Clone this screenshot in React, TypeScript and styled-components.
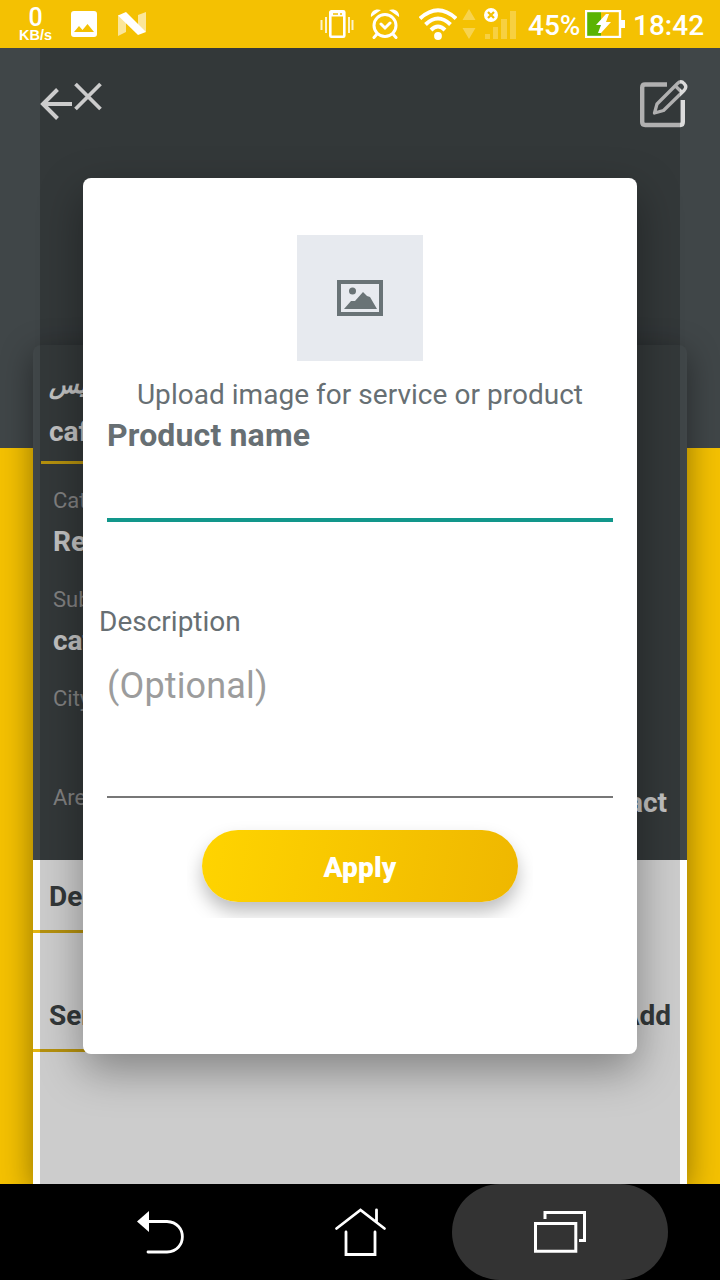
import React from "react";
import styled, { createGlobalStyle } from "styled-components";

const GlobalStyle = createGlobalStyle`
  * { box-sizing: border-box; }
  body {
    margin: 0;
    font-family: Roboto, "DejaVu Sans", sans-serif;
  }
  svg { display: block; flex: none; }
`;

const Screen = styled.div`
  width: 720px;
  height: 1280px;
  display: flex;
  flex-direction: column;
  overflow: hidden;
`;

const StatusBar = styled.header`
  height: 48px;
  flex: none;
  display: flex;
  align-items: center;
  padding: 0 16px 0 18px;
  background: #f4c102;
  color: #fff;
`;

const Speed = styled.div`
  width: 35px;
  display: flex;
  flex-direction: column;
  align-items: center;
  font-family: "Liberation Sans", sans-serif;
  font-weight: 700;
  white-space: nowrap;
`;

const SpeedValue = styled.span`
  font-size: 25px;
  line-height: 22px;
  font-family: Roboto, sans-serif;
  font-weight: 500;
`;

const SpeedUnit = styled.span`
  font-size: 14.5px;
  line-height: 13px;
  margin-bottom: -1px;
`;

const StatusIcon = styled.div<{ $gap: number }>`
  margin-left: ${(p) => p.$gap}px;
`;

const StatusText = styled.span<{ $gap: number; $width: number }>`
  margin-left: ${(p) => p.$gap}px;
  width: ${(p) => p.$width}px;
  font-size: 28px;
  font-weight: 500;
  line-height: 32px;
  padding-top: 3px;
  white-space: nowrap;
`;

const Page = styled.main`
  position: relative;
  flex: 1;
  min-height: 0;
  overflow: hidden;
  display: flex;
  flex-direction: column;
  background: linear-gradient(#404648 400px, #f4c102 400px);
`;

const Toolbar = styled.div`
  height: 297px;
  flex: none;
  display: flex;
  align-items: flex-start;
  justify-content: space-between;
  padding: 31px 32px 0 40px;
`;

const ToolGroup = styled.div`
  display: flex;
`;

const Card = styled.section`
  flex: 1;
  min-height: 0;
  margin: 0 33px;
  border-radius: 8px 8px 0 0;
  background: #404648;
  box-shadow: 0 8px 32px rgba(0, 0, 0, 0.42);
  color: #404648;
`;

const Profile = styled.div`
  height: 515px;
  padding: 25px 8px 0;
  color: #f2f2f2;
`;

const Details = styled.div`
  height: 324px;
  background: #fff;
`;

const Names = styled.div`
  width: 400px;
  height: 94px;
  padding-left: 8px;
  border-bottom: 3px solid #e2b512;
`;

const NameText = styled.div<{ $arabic?: boolean }>`
  height: ${(p) => (p.$arabic ? 43 : 44)}px;
  font-size: ${(p) => (p.$arabic ? 24 : 28)}px;
  line-height: ${(p) => (p.$arabic ? 30 : 38)}px;
  font-weight: 700;
  font-style: ${(p) => (p.$arabic ? "italic" : "normal")};
  white-space: nowrap;
`;

const Field = styled.div<{ $height: number }>`
  height: ${(p) => p.$height}px;
  padding-left: 12px;
`;

const Label = styled.div`
  font-size: 22px;
  line-height: 26px;
  color: #a0a0a0;
`;

const Value = styled.div`
  margin-top: 11px;
  font-size: 28px;
  line-height: 34px;
  font-weight: 700;
`;

const AreaRow = styled.div`
  display: flex;
  justify-content: space-between;
  padding: 0 12px;
`;

const Contact = styled.div`
  font-size: 28px;
  line-height: 35px;
  font-weight: 700;
`;

const Section = styled.div<{ $height: number; $top: number }>`
  height: ${(p) => p.$height}px;
  padding: ${(p) => p.$top}px 16px 0;
  display: flex;
  justify-content: space-between;
  background: linear-gradient(#e2b512, #e2b512) 0 100% / 400px 3px no-repeat;
  font-size: 28px;
  line-height: 34px;
  font-weight: 700;
`;

const Scrim = styled.div`
  position: absolute;
  inset: 0 40px;
  background: rgba(0, 0, 0, 0.2);
`;

const Dialog = styled.div`
  position: absolute;
  left: 83px;
  top: 130px;
  width: 554px;
  height: 876px;
  display: flex;
  flex-direction: column;
  align-items: center;
  padding-top: 57px;
  border-radius: 8px;
  background: #fff;
  box-shadow: 0 16px 44px rgba(0, 0, 0, 0.36);
  color: #676f73;
`;

const Upload = styled.div`
  width: 126px;
  height: 126px;
  flex: none;
  display: flex;
  align-items: center;
  justify-content: center;
  background: #e7eaef;
`;

const UploadText = styled.div`
  margin-top: 16px;
  font-size: 28px;
  line-height: 36px;
  letter-spacing: 0.03px;
  white-space: nowrap;
`;

const ProductInput = styled.div`
  width: 506px;
  height: 107px;
  margin-top: 2px;
  padding-top: 2px;
  border-bottom: 4px solid #12978b;
  font-size: 32px;
  line-height: 36px;
  font-weight: 700;
  letter-spacing: 0.15px;
`;

const DescriptionLabel = styled.div`
  width: 522px;
  margin-top: 83px;
  font-size: 28px;
  line-height: 34px;
`;

const DescriptionInput = styled.div`
  width: 506px;
  height: 159px;
  padding-top: 25px;
  border-bottom: 2px solid #777;
  font-size: 36px;
  line-height: 44px;
  letter-spacing: 0.15px;
  color: #9c9c9c;
`;

const ButtonArea = styled.div`
  width: 346px;
  height: 120px;
  padding: 32px 15px 0;
  overflow: hidden;
`;

const Apply = styled.button`
  display: block;
  width: 316px;
  height: 72px;
  padding: 3px 0 0;
  border: 0;
  border-radius: 36px;
  background: linear-gradient(100deg, #ffd400, #efb700);
  box-shadow: 0 10px 18px rgba(0, 0, 0, 0.26);
  color: #fff;
  font: 900 28px Roboto, sans-serif;
  letter-spacing: 0.2px;
`;

const NavBar = styled.nav`
  height: 96px;
  flex: none;
  display: flex;
  align-items: center;
  padding-left: 52px;
  background: #000;
`;

const NavButton = styled.div<{ $width: number; $active?: boolean }>`
  width: ${(p) => p.$width}px;
  height: 96px;
  border-radius: 48px;
  background: ${(p) => (p.$active ? "#333" : "transparent")};
`;

const PictureIcon = () => (
  <svg width="26" height="26" viewBox="0 0 26 26">
    <path fill="#fff" fillRule="evenodd" d="M3 0h20a3 3 0 0 1 3 3v20a3 3 0 0 1-3 3H3a3 3 0 0 1-3-3V3a3 3 0 0 1 3-3Zm0 21h20l-6.500-8-5 6-3.500-4Z" />
  </svg>
);

const NIcon = () => (
  <svg width="28" height="24" viewBox="0 0 28 24" fill="#fff">
    <path opacity=".6" d="M0 3 8 8v12l-8 4ZM20 3l8-3v20l-8-5Z" />
    <path d="M0 3.500 8 0l20 20-8 3Z" />
  </svg>
);

const VibrateIcon = () => (
  <svg width="34" height="28" viewBox="0 0 34 28" fill="none" stroke="#fff">
    <rect x="10.3" y="1.3" width="14" height="25.4" rx="1" strokeWidth="2.6" />
    <path strokeWidth="5" d="M11 4h13" />
    <path strokeWidth="1.5" d="M13 4h5M20 4h2" stroke="#f4c102" />
    <path strokeWidth="2" d="M6 7v16M29 7v16M1.500 10v10M32.500 10v10" opacity=".8" />
  </svg>
);

const AlarmIcon = () => (
  <svg width="30" height="30" viewBox="0 0 30 30" fill="none" stroke="#fff" strokeLinecap="round">
    <circle cx="15" cy="16.500" r="11" strokeWidth="3" />
    <path strokeWidth="3" d="m11 15 4 4 5-5M7 25l-3 3.500M23 25l3 3.500" />
    <path fill="#fff" stroke="none" d="M1 8C0 3 5-1 11 1ZM29 8c1-5-4-9-10-7Z" />
  </svg>
);

const WifiIcon = () => (
  <svg width="38" height="32" viewBox="0 0 38 32" fill="none" stroke="#fff" strokeWidth="4">
    <path d="M1 10.500Q19-6 37 10.500M6.500 16.500Q19 4.500 31.500 16.500M12 22Q19 15 26 22" />
    <circle cx="19" cy="28" r="3.900" fill="#fff" stroke="none" />
  </svg>
);

const DataIcon = () => (
  <svg width="14" height="32" viewBox="0 0 14 32" fill="#fff" opacity=".3">
    <path d="m7 1 6.500 11H.5ZM.5 20h13L7 31Z" />
  </svg>
);

const SignalIcon = () => (
  <svg width="33" height="32" viewBox="0 0 33 32">
    <path fill="#fff" opacity=".25" d="M1 26h5v5H1ZM9 19h5v12H9ZM17 11h6v20h-6ZM26 3h6v28h-6Z" />
    <circle cx="7" cy="7" r="7" fill="#fff" />
    <path d="m4 4 6 6m0-6-6 6" stroke="#f4c102" strokeWidth="2.2" />
  </svg>
);

const BatteryIcon = () => (
  <svg width="40" height="28" viewBox="0 0 40 28">
    <path fill="#5bb302" d="M2 2h14v24H2Z" />
    <rect x="1" y="1" width="34" height="26" fill="none" stroke="#fff" strokeWidth="2.400" />
    <path fill="#fff" d="M36 10h4v8h-4ZM21 4 11 15h5l-3 8h3l10-11h-5l3-8Z" />
  </svg>
);

const BackArrow = () => (
  <svg width="33" height="50" viewBox="0 0 33 50" fill="none" stroke="#fff" strokeWidth="4">
    <path d="M17.500 10.500 3 25l14.500 14.500M3 25h29" />
  </svg>
);

const CloseIcon = () => (
  <svg width="30" height="40" viewBox="0 0 30 40" fill="none" stroke="#fff" strokeWidth="3.800">
    <path d="m2.500 5 25 25m0-25-25 25" />
  </svg>
);

const EditIcon = () => (
  <svg width="48" height="50" viewBox="0 0 48 50" fill="none" stroke="#dcdcdc" strokeWidth="4.400">
    <path d="M27 5.500H5Q2.200 5.500 2.200 8.500V43q0 3 3 3h35q2.600 0 2.600-3V21" />
    <path strokeWidth="3.300" strokeLinejoin="round" d="M14.500 34 17 25 37.500 4.500Q41 1 44 4.500q3.500 3.500 0 7L23.500 31.500ZM35.500 7l6.500 6.500" />
  </svg>
);

const UploadIcon = () => (
  <svg width="46" height="36" viewBox="0 0 46 36">
    <rect x="2" y="2" width="42" height="32" fill="none" stroke="#697376" strokeWidth="4" />
    <circle cx="15.500" cy="11" r="3.500" fill="#697376" />
    <path fill="#697376" d="m7 29 7-8h4l8-9 4 4 3 1 7 12Z" />
  </svg>
);

const BackNav = () => (
  <svg width="168" height="96" viewBox="52 0 168 96" fill="none" stroke="#fff" strokeWidth="2.800">
    <path strokeLinecap="round" d="M147 37.500h20c20.500 1 20.500 29.500 0 30.500h-19" />
    <path d="m137 37.500 12-10.500v21Z" fill="#fff" stroke="none" />
  </svg>
);

const HomeNav = () => (
  <svg width="232" height="96" viewBox="220 0 232 96" fill="none" stroke="#fff" strokeWidth="2.800" strokeLinecap="round">
    <path d="m336.500 44.500 24-18.500 24 18.500M376.500 26v11.500M346 48v22.500h29V48" />
  </svg>
);

const RecentNav = () => (
  <svg width="216" height="96" viewBox="452 0 216 96" fill="none" stroke="#fff" strokeWidth="3">
    <path d="M535.500 39.500h40.300V67.300h-40.300Z" />
    <path d="M545 35v-6.500h39.500V56.500H579" />
  </svg>
);

export default function App() {
  return (
    <Screen>
      <GlobalStyle />
      <StatusBar>
        <Speed>
          <SpeedValue>0</SpeedValue>
          <SpeedUnit>KB/s</SpeedUnit>
        </Speed>
        <StatusIcon $gap={18}><PictureIcon /></StatusIcon>
        <StatusIcon $gap={21}><NIcon /></StatusIcon>
        <StatusIcon $gap={174}><VibrateIcon /></StatusIcon>
        <StatusIcon $gap={16}><AlarmIcon /></StatusIcon>
        <StatusIcon $gap={19}><WifiIcon /></StatusIcon>
        <StatusIcon $gap={5}><DataIcon /></StatusIcon>
        <StatusIcon $gap={8}><SignalIcon /></StatusIcon>
        <StatusText $gap={11} $width={52}>45%</StatusText>
        <StatusIcon $gap={5}><BatteryIcon /></StatusIcon>
        <StatusText $gap={8} $width={71}>18:42</StatusText>
      </StatusBar>
      <Page>
        <Toolbar>
          <ToolGroup>
            <BackArrow />
            <CloseIcon />
          </ToolGroup>
          <EditIcon />
        </Toolbar>
        <Card>
          <Profile>
            <Names>
              <NameText $arabic>كافيس</NameText>
              <NameText>cafe</NameText>
            </Names>
            <Field $height={24} />
            <Field $height={99}>
              <Label>Category</Label>
              <Value>Restaurant</Value>
            </Field>
            <Field $height={99}>
              <Label>Sub category</Label>
              <Value>cafe</Value>
            </Field>
            <Field $height={99}>
              <Label>City</Label>
            </Field>
            <AreaRow>
              <Label>Area</Label>
              <Contact>Contact</Contact>
            </AreaRow>
          </Profile>
          <Details>
            <Section $height={73} $top={20}>Description</Section>
            <Section $height={119} $top={66}>
              <span>Services</span>
              <span>Add</span>
            </Section>
          </Details>
        </Card>
        <Scrim />
        <Dialog>
          <Upload><UploadIcon /></Upload>
          <UploadText>Upload image for service or product</UploadText>
          <ProductInput>Product name</ProductInput>
          <DescriptionLabel>Description</DescriptionLabel>
          <DescriptionInput>(Optional)</DescriptionInput>
          <ButtonArea>
            <Apply>Apply</Apply>
          </ButtonArea>
        </Dialog>
      </Page>
      <NavBar>
        <NavButton $width={168}><BackNav /></NavButton>
        <NavButton $width={232}><HomeNav /></NavButton>
        <NavButton $width={216} $active><RecentNav /></NavButton>
      </NavBar>
    </Screen>
  );
}
